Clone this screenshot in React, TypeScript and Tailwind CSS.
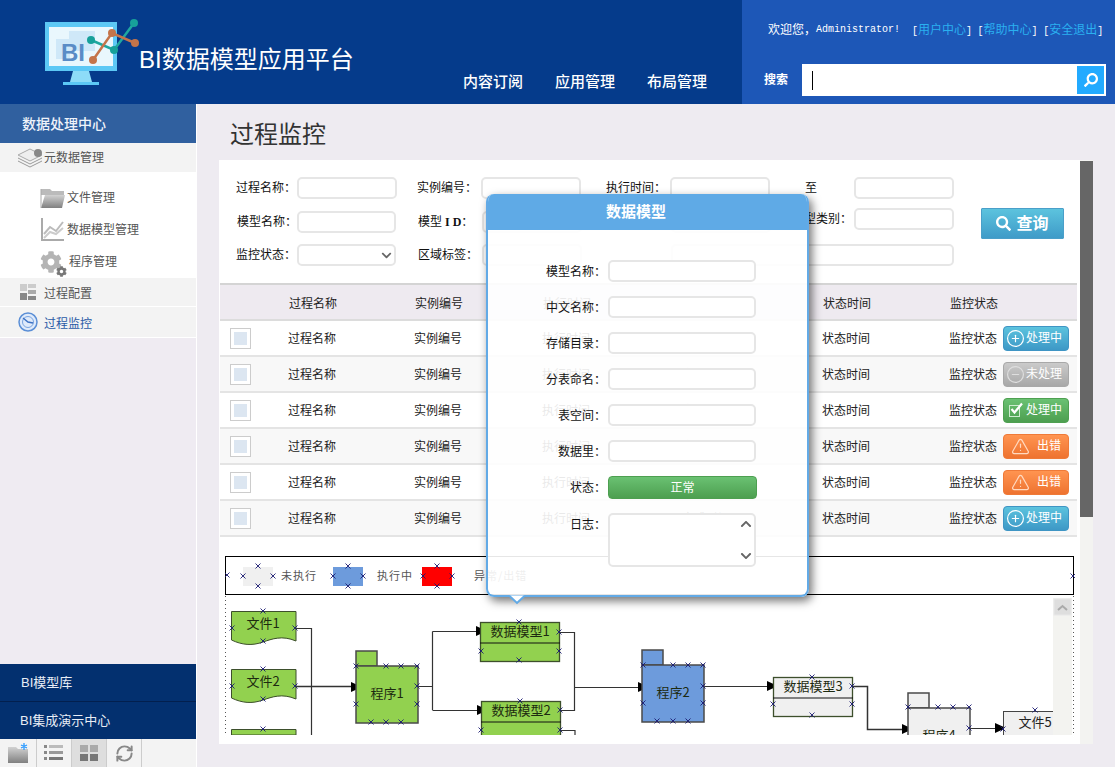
import { CircleMinus, CirclePlus, RefreshCw, TriangleAlert } from "lucide-react";
import { FaChevronDown, FaChevronUp, FaCog, FaSearch } from "react-icons/fa";

const Logo = () => (
  <svg width="96" height="70" viewBox="45 18 96 70" className="shrink-0">
    <rect x="45" y="22" width="72" height="49" fill="#5cc8f5" />
    <rect x="49" y="27" width="64" height="39" fill="#e9f7fd" />
    <rect x="69" y="31" width="26" height="20" fill="#cfe8f8" />
    <rect x="56" y="39" width="14" height="20" fill="#cfe8f8" />
    <path d="M73 71h16l3 11H70z" fill="#8ddcf8" />
    <rect x="63" y="82" width="36" height="3" fill="#5cc8f5" />
    <text x="61" y="61" fontSize="24" fontWeight="700" fill="#5a8cc6" fontFamily="Liberation Sans">
      BI
    </text>
    <path d="M91 40l23 10 20-27" fill="none" stroke="#1fa8a0" strokeWidth="2.5" />
    <path d="M93 60l19-27 23 10" fill="none" stroke="#c4744a" strokeWidth="2.5" />
    <circle cx="134" cy="23" r="4" fill="#17a19a" />
    <circle cx="91" cy="40" r="4" fill="#17a19a" />
    <circle cx="114" cy="50" r="4" fill="#17a19a" />
    <circle cx="112" cy="33" r="4" fill="#c4744a" />
    <circle cx="135" cy="43" r="4" fill="#c4744a" />
    <circle cx="93" cy="60" r="4" fill="#c4744a" />
  </svg>
);

const TopLink = ({ children }: any) => (
  <span className="mr-[5.500px]">
    <span className="font-['Liberation_Mono',monospace] text-[10px]">[</span>
    <span className="text-[#2ab0f0]">{children}</span>
    <span className="font-['Liberation_Mono',monospace] text-[10px]">]</span>
  </span>
);

const Header = () => (
  <div className="flex h-[104px] shrink-0 bg-[#053b8b]">
    <div className="flex w-[742px] items-start pl-[45px]">
      <div className="mt-[18px]">
        <Logo />
      </div>
      <div className="mt-[42px] -ml-[2px] w-[213px] whitespace-nowrap text-[24px] leading-[36px] text-white">BI数据模型应用平台</div>
      <div className="mt-[71px] ml-[111px] flex gap-[32px] whitespace-nowrap text-[15px] leading-[22px] font-medium text-white">
        <span>内容订阅</span>
        <span>应用管理</span>
        <span>布局管理</span>
      </div>
    </div>
    <div className="flex-1 bg-[#1d57b7]">
      <div className="flex h-[64px] items-start pt-[21px] pl-[26px] text-[12px] leading-[18px] whitespace-nowrap text-white">
        <span>欢迎您，</span>
        <span className="mr-[12px] font-['Liberation_Mono',monospace] text-[10px]">Administrator!</span>
        <TopLink>用户中心</TopLink>
        <TopLink>帮助中心</TopLink>
        <TopLink>安全退出</TopLink>
      </div>
      <div className="flex items-center pl-[22px]">
        <span className="w-[38px] text-[12px] font-bold text-white">搜索</span>
        <div className="flex h-[32px] w-[304px] items-center bg-white pr-[2px] pl-[10px]">
          <div className="h-[19px] w-px bg-black" />
          <div className="ml-auto flex h-[28px] w-[27px] items-center justify-center bg-[#22aaff]">
            <FaSearch className="-scale-x-100 text-[14px] text-white" />
          </div>
        </div>
      </div>
    </div>
  </div>
);

const Icon = ({ children }: any) => (
  <svg width="28" height="28" viewBox="0 0 28 28" className="shrink-0">
    <defs>
      <linearGradient id="grayg" x1="0" y1="0" x2="0" y2="1">
        <stop offset="0" stopColor="#d2d2d2" />
        <stop offset="1" stopColor="#808080" />
      </linearGradient>
    </defs>
    {children}
  </svg>
);

const Sidebar = () => (
  <div className="flex w-[197px] shrink-0 flex-col justify-between border-r border-white bg-[#efebf2]">
    <div>
      <div className="flex h-[39px] items-center bg-[#30609f] pt-[2px] pl-[22px] text-[14px] font-medium text-[#eef3fa]">数据处理中心</div>
      <div className="flex h-[29px] items-center bg-[#f3f3f3] pl-[17px] text-[12px] text-[#555]">
        <svg width="27" height="22" viewBox="0 0 27 22" className="shrink-0">
          <path d="M1 8l12-6 12 6-12 6z" fill="#eee" stroke="#aaa" />
          <path d="M1 11l12 6 12-6M1 14l12 6 12-6" fill="none" stroke="#999" />
          <circle cx="21" cy="6" r="4" fill="#888" />
        </svg>
        <span>元数据管理</span>
      </div>
      <div className="h-[106px] bg-white pt-[10px] pl-[40px] text-[12px] text-[#555]">
        <div className="flex h-[32px] items-center gap-[2px]">
          <Icon>
            <path d="M1 5h9l2 2h12v4H1z" fill="#bbb" />
            <path d="M5 11h20l-3 13H1z" fill="url(#grayg)" />
            <path d="M1 5v19" stroke="#aaa" />
          </Icon>
          <span className="ml-[-3px]">文件管理</span>
        </div>
        <div className="flex h-[32px] items-center gap-[2px]">
          <Icon>
            <path d="M2 2v22h22" fill="none" stroke="#aaa" strokeWidth="2" />
            <path d="M4 18l6-7 6 4 7-9" fill="none" stroke="#bbb" strokeWidth="2" />
            <path d="M4 22l6-6 6 2 7-6" fill="none" stroke="#ccc" strokeWidth="2" />
          </Icon>
          <span className="ml-[-3px]">数据模型管理</span>
        </div>
        <div className="relative flex h-[32px] items-center gap-[2px]">
          <FaCog className="h-[22px] w-[22px] shrink-0 text-[#b4b4b4]" />
          <FaCog className="absolute top-[20px] left-[16px] h-[11px] w-[11px] text-[#777]" />
          <span className="ml-[5px]">程序管理</span>
        </div>
      </div>
      <div className="flex h-[29px] items-center border-b border-white bg-[#f3f3f3] pl-[20px] text-[12px] text-[#555]">
        <svg width="16" height="16" viewBox="0 0 16 16" className="shrink-0">
          <rect x="0" y="0" width="7" height="7" fill="#ccc" />
          <rect x="0" y="9" width="7" height="7" fill="#888" />
          <rect x="8" y="0" width="8" height="4" fill="#ccc" />
          <rect x="8" y="6" width="8" height="4" fill="#aaa" />
          <rect x="8" y="12" width="8" height="4" fill="#888" />
        </svg>
        <span className="ml-[8px] pt-[4px]">过程配置</span>
      </div>
      <div className="flex h-[31px] items-center border-b border-white bg-[#f3f3f3] pl-[18px] text-[12px] text-[#2a5aa6]">
        <svg width="20" height="20" viewBox="0 0 20 20" className="shrink-0">
          <circle cx="10" cy="10" r="9" fill="#dfeafa" stroke="#5b8fd6" strokeWidth="1.5" />
          <circle cx="10" cy="10" r="5.5" fill="none" stroke="#7aa5e0" />
          <path d="M5 6l5 4 5 1" fill="none" stroke="#3d72c4" strokeWidth="1.5" />
        </svg>
        <span className="ml-[6px] pt-[4px]">过程监控</span>
      </div>
    </div>
    <div>
      <div className="flex h-[38px] items-center border-b border-[#021f4e] bg-[#03306f] pl-[21px] text-[13px] text-[#e8edf5]">BI模型库</div>
      <div className="flex h-[37px] items-center bg-[#03306f] pl-[20px] text-[13px] text-[#e8edf5]">BI集成演示中心</div>
      <div className="flex h-[28px] bg-[#f3f3f3]">
        <div className="flex w-[37px] items-center justify-center border-r border-[#ccc]">
          <svg width="24" height="22" viewBox="0 0 24 22">
            <path d="M2 5h8l2 2h10v14H2z" fill="url(#grayg)" />
            <path d="M18 1v7M15 3l6 3M21 3l-6 3" stroke="#2e9bff" strokeWidth="1.3" />
          </svg>
        </div>
        <div className="flex w-[35px] items-center justify-center border-r border-[#ccc]">
          <svg width="20" height="16" viewBox="0 0 20 16">
            <path d="M0 0h3v3H0zM0 6h3v3H0zM0 12h3v3H0z" fill="#888" />
            <path d="M5 0h14v3H5z" fill="#bbb" />
            <path d="M5 6h14v3H5z" fill="#999" />
            <path d="M5 12h14v3H5z" fill="#777" />
          </svg>
        </div>
        <div className="flex w-[35px] items-center justify-center border-r border-[#ccc] bg-[#dedede]">
          <svg width="18" height="16" viewBox="0 0 18 16">
            <path d="M0 0h8v7H0zM10 0h8v7h-8z" fill="#aaa" />
            <path d="M0 9h8v7H0zM10 9h8v7h-8z" fill="#777" />
          </svg>
        </div>
        <div className="flex w-[35px] items-center justify-center border-r border-[#ccc]">
          <RefreshCw className="h-[19px] w-[19px] text-[#888]" strokeWidth={2.5} />
        </div>
      </div>
    </div>
  </div>
);

const inputCls = "h-[22px] rounded-[5px] border-2 border-[#e6e6e6] bg-white";

const Label = ({ w, children, className = "" }: any) => (
  <div className={`shrink-0 text-[12px] leading-[22px] whitespace-nowrap text-[#111] ${className}`} style={{ width: w }}>
    {children}
  </div>
);

const SearchForm = () => (
  <div className="relative h-[123px] pt-[17px] pl-[17px]">
    <div className="flex">
      <Label w={61}>过程名称：</Label>
      <div className={`${inputCls} w-[100px]`} />
      <Label w={64} className="ml-[20px]">实例编号：</Label>
      <div className={`${inputCls} w-[100px]`} />
      <Label w={64} className="ml-[25px]">执行时间：</Label>
      <div className={`${inputCls} w-[100px]`} />
      <Label w={49} className="ml-[35px]">至</Label>
      <div className={`${inputCls} w-[100px]`} />
    </div>
    <div className="mt-[12px] flex">
      <Label w={61} className="pl-[1px]">模型名称：</Label>
      <div className={`${inputCls} w-[99px]`} />
      <Label w={64} className="ml-[22px]">
        模型<span className="font-['Liberation_Serif',serif] font-bold"> I D</span>：
      </Label>
      <div className={`${inputCls} w-[100px]`} />
      <div className={`${inputCls} ml-[89px] w-[100px]`} />
      <Label w={62} className="-mt-[3px] ml-[21px]">模型类别：</Label>
      <div className={`${inputCls} -mt-[3px] w-[100px]`} />
    </div>
    <div className="mt-[11px] flex">
      <Label w={61}>监控状态：</Label>
      <div className={`${inputCls} relative w-[99px]`}>
        <FaChevronDown className="absolute top-[4px] right-[2px] text-[11px] text-[#666]" />
      </div>
      <Label w={64} className="ml-[22px]">区域标签：</Label>
      <div className={`${inputCls} w-[100px]`} />
      <div className={`${inputCls} ml-[89px] w-[283px]`} />
    </div>
    <div className="absolute top-[48px] left-[762px] flex h-[31px] w-[83px] items-center justify-center gap-[5px] rounded-[1px] border border-[#4a9fc9] bg-gradient-to-b from-[#5cc3de] to-[#3f9bc8] text-[16px] font-bold text-white">
      <FaSearch className="text-[15px]" />
      查询
    </div>
  </div>
);

const Status = ({ kind }: any) => {
  if (kind === "gray")
    return (
      <div className="flex h-[25px] w-[66px] items-center gap-[1px] rounded-[4px] border border-[#a8a8a8] bg-gradient-to-b from-[#cacaca] to-[#a8a8a8] pl-[2px] text-[12px] text-white">
        <CircleMinus className="h-[19px] w-[19px] text-[#dedede]" strokeWidth={1.5} />
        未处理
      </div>
    );
  if (kind === "green")
    return (
      <div className="flex h-[25px] w-[66px] items-center gap-[2px] rounded-[4px] border border-[#4fa051] bg-gradient-to-b from-[#6ac172] to-[#4d9f50] pl-[4px] text-[12px] text-white">
        <svg width="16" height="16" viewBox="0 0 16 16" className="shrink-0">
          <rect x="1.500" y="3.500" width="10" height="11" fill="none" stroke="#cdeccf" />
          <path d="M3.500 7l3 3.500L14 1.500" fill="none" stroke="#fff" strokeWidth="2.200" />
        </svg>
        处理中
      </div>
    );
  if (kind === "orange")
    return (
      <div className="flex h-[25px] w-[66px] items-center justify-center gap-[7px] rounded-[4px] border border-[#ef7a38] bg-gradient-to-b from-[#ff9450] to-[#ee7330] text-[12px] text-white">
        <TriangleAlert className="h-[19px] w-[19px] text-[#ffd9c0]" strokeWidth={1.5} />
        出错
      </div>
    );
  return (
    <div className="flex h-[25px] w-[66px] items-center gap-[1px] rounded-[4px] border border-[#3f95c4] bg-gradient-to-b from-[#5cc3de] to-[#3d98c6] pl-[2px] text-[12px] text-white">
      <CirclePlus className="h-[19px] w-[19px]" strokeWidth={1.5} />
      处理中
    </div>
  );
};

const rows = ["blue", "gray", "green", "orange", "orange", "blue"];

const ProcessTable = () => (
  <table className="ml-px w-[857px] table-fixed border-collapse text-left text-[12px] text-[#222]">
    <colgroup>
      <col className="w-[68px]" />
      <col className="w-[126px]" />
      <col className="w-[128px]" />
      <col className="w-[140px]" />
      <col className="w-[140px]" />
      <col className="w-[127px]" />
      <col className="w-[128px]" />
    </colgroup>
    <thead>
      <tr className="h-[36px] border-t-2 border-b-2 border-t-[#d4d4d4] border-b-[#dcdcdc] bg-[#eeeaf0]">
        <th />
        {["过程名称", "实例编号", "执行时间", "完成时间", "状态时间", "监控状态"].map((h) => (
          <th key={h} className="pt-[4px] pl-px font-normal">
            {h}
          </th>
        ))}
      </tr>
    </thead>
    <tbody>
      {rows.map((kind, i) => (
        <tr key={i} className={`h-[36px] border-b-2 border-[#e4e4e4] ${i % 2 ? "bg-[#f8f8f8]" : "bg-white"}`}>
          <td className="pl-[10px]">
            <div className="h-[21px] w-[21px] border border-[#ccc] bg-white p-[3px]">
              <div className="h-full w-full bg-[#dce6f1]" />
            </div>
          </td>
          <td className="pt-[2px]">过程名称</td>
          <td className="pt-[2px]">实例编号</td>
          <td className="pt-[2px]">执行时间</td>
          <td className="pt-[2px]">完成时间</td>
          <td className="pt-[2px]">状态时间</td>
          <td>
            <div className="flex items-center gap-[6px]">
              <span className="pt-[2px]">监控状态</span>
              <Status kind={kind} />
            </div>
          </td>
        </tr>
      ))}
    </tbody>
  </table>
);

const marks = [
  [227, 575], [258, 566], [243, 576], [273, 576], [258, 586], [333, 576], [363, 576], [348, 566], [348, 586],
  [423, 576], [452, 576], [437, 566], [437, 586], [1073, 576],
  [263, 611], [232, 628], [295, 628], [263, 641], [263, 669], [232, 686], [295, 686], [263, 699], [263, 729],
  [356, 666], [386, 666], [401, 666], [417, 666], [417, 686], [417, 704], [356, 704], [371, 722], [386, 722], [401, 722],
  [519, 622], [559, 632], [481, 651], [559, 651], [519, 660], [520, 701], [560, 710], [481, 730], [560, 730],
  [643, 665], [673, 665], [688, 665], [703, 665], [703, 686], [703, 703], [643, 703], [657, 721], [673, 721], [688, 721],
  [812, 677], [852, 686], [773, 704], [852, 704], [812, 715],
  [908, 707], [938, 707], [953, 707], [969, 707], [969, 728], [1003, 729], [1035, 710],
];

const Wave = ({ y, label }: any) => (
  <g>
    <path
      d={`M231.5 ${y + 0.5}H296V${y + 30}C282 ${y + 24} 272 ${y + 28} 263 ${y + 31}C252 ${y + 35} 242 ${y + 34} 231.5 ${y + 29}Z`}
      fill="#92d14f"
      stroke="#3d4f2c"
    />
    <text x="263" y={y + 17} textAnchor="middle" fontSize="13" fill="#1d2a10">
      {label}
    </text>
  </g>
);

const Folder = ({ x, y, fill, label }: any) => (
  <g stroke="#4a4a4a" strokeWidth="1.5" fill={fill}>
    <rect x={x} y={y} width="21" height="15" />
    <rect x={x} y={y + 15} width="62" height="57" />
    <text x={x + 31} y={y + 47} textAnchor="middle" fontSize="13" fill="#1d2a10" stroke="none">
      {label}
    </text>
  </g>
);

const Model = ({ x, y, fill, label, h = 39, div = 21 }: any) => (
  <g stroke="#3d4f2c" fill={fill}>
    <rect x={x + 0.5} y={y + 0.5} width="79" height={h} strokeWidth="1.3" />
    <path d={`M${x} ${y + div}h80`} stroke="#111" />
    <text x={x + 40} y={y + 14} textAnchor="middle" fontSize="13" fill="#1d2a10" stroke="none">
      {label}
    </text>
  </g>
);

const Arrow = ({ x, y }: any) => <path d={`M${x} ${y - 5}l11 5-11 5z`} fill="#000" />;

const Diagram = () => (
  <svg width="850" height="179" viewBox="225 556 850 179" className="ml-[6px] block font-['Noto_Sans_CJK_SC',sans-serif]">
    <path d="M225.5 556v179M1073.500 556v179" fill="none" stroke="#555" strokeDasharray="1 3" />
    <rect x="225.5" y="556.5" width="848" height="38" fill="#fff" stroke="#000" />
    <rect x="243" y="567" width="30" height="19" fill="#f0f0f0" />
    <text x="281" y="580" fontSize="11" fill="#555" letterSpacing="1">未执行</text>
    <rect x="333" y="567" width="30" height="19" fill="#6d9bdc" />
    <text x="377" y="580" fontSize="11" fill="#555" letterSpacing="1">执行中</text>
    <rect x="422" y="567" width="30" height="19" fill="#ff0000" />
    <text x="474" y="580" fontSize="11" fill="#555" letterSpacing="1">异常/出错</text>

    <g fill="none" stroke="#333" strokeWidth="1.2">
      <path d="M296 628.5h15.5V735" />
      <path d="M296 686.5h66" strokeWidth="1.6" />
      <path d="M417 686.5h15.5M432.5 631.5V710M432.5 631.5h50M432.5 710.5h50" />
      <path d="M559 632.5h15.5V710.5H560M574 687.5h70" />
      <path d="M560 730.5h15V735" />
      <path d="M704 686.5h70" />
      <path d="M852 686.5h15.5V729.5h40" strokeWidth="1.5" />
      <path d="M969 728.5h36" />
    </g>
    <Arrow x={351} y={687} />
    <Arrow x={476} y={631} />
    <Arrow x={477} y={710} />
    <Arrow x={638} y={687} />
    <Arrow x={767} y={686} />
    <Arrow x={902} y={729} />
    <Arrow x={995} y={728} />

    <Wave y={611} label="文件1" />
    <Wave y={669} label="文件2" />
    <path d="M231.5 729.5H296V735H231.5Z" fill="#92d14f" stroke="#3d4f2c" />
    <Folder x={356} y={651} fill="#92d14f" label="程序1" />
    <Model x={480} y={622} fill="#92d14f" label="数据模型1" />
    <Model x={481} y={701} fill="#92d14f" label="数据模型2" />
    <Folder x={642} y={650} fill="#6d9bdc" label="程序2" />
    <Model x={773} y={677} fill="#f0f0f0" label="数据模型3" />
    <Folder x={908} y={693} fill="#f0f0f0" label="程序4" />
    <rect x="1003.5" y="711.5" width="60" height="40" fill="#f0f0f0" stroke="#444" />
    <text x="1035" y="727" textAnchor="middle" fontSize="13" fill="#222">文件5</text>

    <g stroke="#1a1a70" strokeWidth="0.9">
      {marks.map(([x, y]) => (
        <path key={`${x}-${y}`} d={`M${x - 2.5} ${y - 2.5}l5 5m0-5l-5 5`} />
      ))}
    </g>

    <rect x="1053" y="598" width="19" height="137" fill="#f3f3f0" />
    <rect x="1054" y="599" width="17" height="16" fill="#dedede" stroke="#e8e8e8" />
    <path d="M1058 610l4.500-4 4.500 4" fill="none" stroke="#aaa" strokeWidth="2" />
  </svg>
);

const ModalField = ({ label, className = "", children }: any) => (
  <div className={`flex h-[36px] items-start ${className}`}>
    <div className="w-[120px] pt-[1px] pr-[2px] text-right text-[12px] leading-[22px] text-[#111]">{label}：</div>
    {children ?? <div className={`${inputCls} w-[148px]`} />}
  </div>
);

const Modal = () => (
  <div className="absolute top-[194px] left-[486px] w-[323px]">
    <div className="h-[403px] overflow-hidden rounded-[8px] border-x-2 border-b-2 border-[#62aae6] bg-white/[.90] shadow-[3px_4px_10px_rgba(0,0,0,0.55)]">
      <div className="-mx-[2px] flex h-[36px] items-center justify-center bg-[#5faae6] pr-[23px] text-[15px] font-bold text-white">数据模型</div>
      <div className="pt-[30px]">
        <ModalField label="模型名称" />
        <ModalField label="中文名称" />
        <ModalField label="存储目录" />
        <ModalField label="分表命名" />
        <ModalField label="表空间" />
        <ModalField label="数据里" />
        <ModalField label="状态" className="h-[37px]">
          <div className="flex h-[23px] w-[149px] items-center justify-center rounded-[4px] border border-[#4d9f50] bg-gradient-to-b from-[#6ac172] to-[#4d9f50] text-[12px] text-white">正常</div>
        </ModalField>
        <ModalField label="日志">
          <div className={`${inputCls} relative h-[54px] w-[148px]`}>
            <FaChevronUp className="absolute top-[3px] right-[2px] text-[12px] text-[#666]" />
            <FaChevronDown className="absolute right-[2px] bottom-[3px] text-[12px] text-[#666]" />
          </div>
        </ModalField>
      </div>
    </div>
    <svg width="18" height="10" viewBox="0 0 18 10" className="absolute top-[401px] left-[22px]">
      <path d="M1 0.500l8 7.500 8-7.500" fill="#fff" stroke="#62aae6" strokeWidth="2" />
    </svg>
  </div>
);

export default function App() {
  return (
    <div className="relative flex h-[767px] w-[1115px] flex-col overflow-hidden bg-[#eeebf1] font-['Liberation_Sans','Noto_Sans_CJK_SC',sans-serif]">
      <Header />
      <div className="flex min-h-0 flex-1">
        <Sidebar />
        <div className="flex-1 pl-[22px]">
          <div className="h-[56px] pl-[11px] text-[24px] leading-[62px] text-[#333]">过程监控</div>
          <div className="flex h-[584px] w-[874px] bg-white">
            <div className="w-[861px] overflow-hidden">
              <SearchForm />
              <ProcessTable />
              <div className="h-[19px]" />
              <Diagram />
            </div>
            <div className="w-[13px] bg-[#f3f3f1]">
              <div className="mt-px h-[356px] bg-[#666]" />
            </div>
          </div>
        </div>
      </div>
      <Modal />
    </div>
  );
}
